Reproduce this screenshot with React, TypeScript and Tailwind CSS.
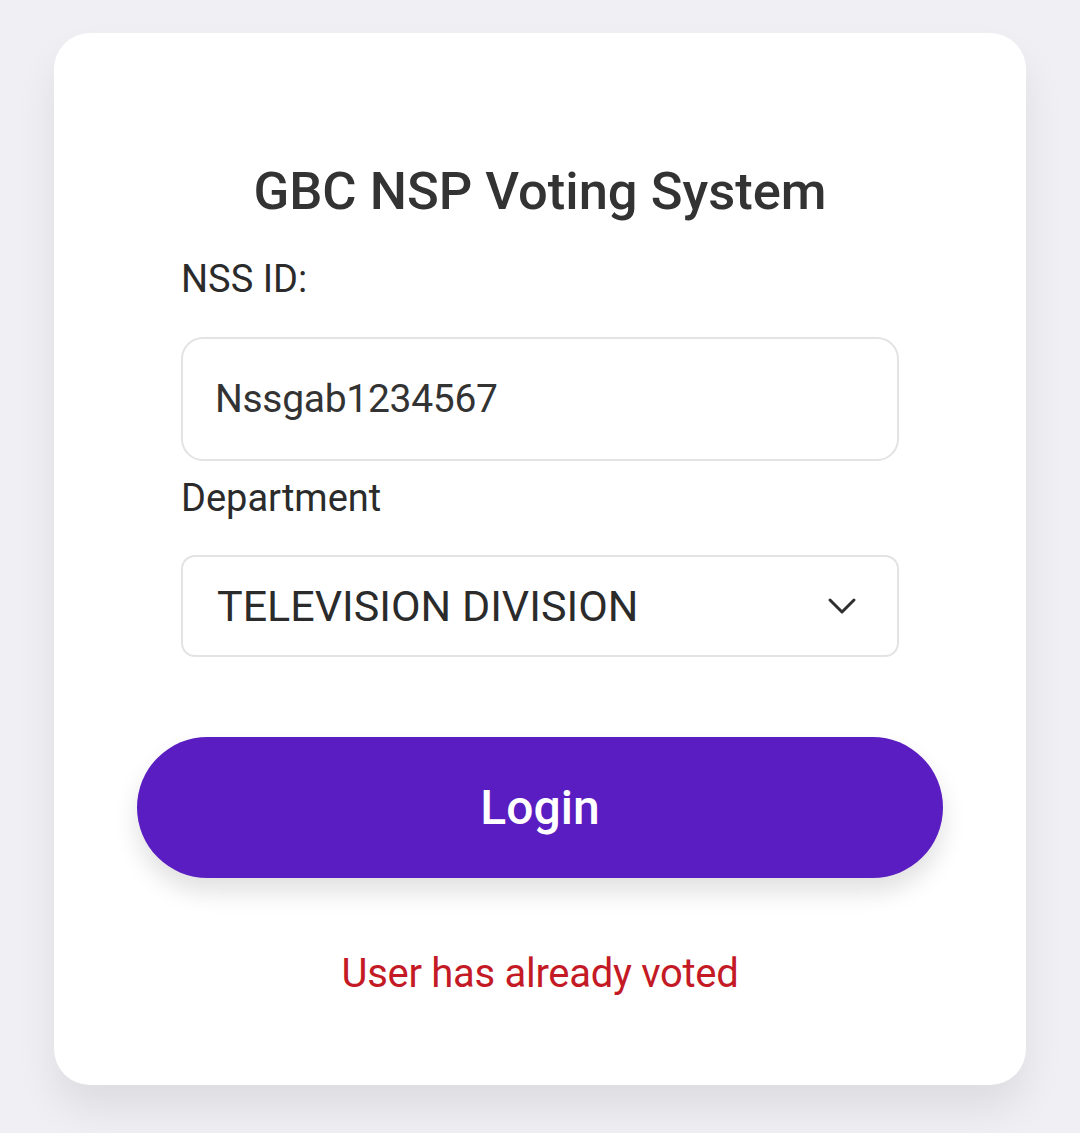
const ChevronDown = () => (
  <svg width="30" height="18" viewBox="0 0 30 18" fill="none">
    <path d="M3 3l12 12 12-12" stroke="#2f2f2f" strokeWidth="3" strokeLinecap="round" strokeLinejoin="round" />
  </svg>
)

const App = () => {
  return (
    <div className="min-h-[1133px] bg-[#efeff4] px-[54px] pt-[33px] pb-[48px] font-['Roboto',sans-serif]">
      <div className="bg-white rounded-[36px] shadow-[0_24px_40px_rgba(0,0,0,0.08)] h-[1052px] px-[83px] pt-[128px]">
        <h1 className="text-center text-[52.5px] leading-[60px] font-medium text-[#333333]">
          GBC NSP Voting System
        </h1>
        <div className="px-[44px] mt-[36px]">
          <label className="block text-[38px] leading-[44px] text-[#2b2b2b]">NSS ID:</label>
          <div className="mt-[36px] h-[124px] rounded-[22px] border-2 border-[#e3e3e6] flex items-center px-[32px]">
            <span className="text-[39px] text-[#333333] tracking-[-0.3px]">Nssgab1234567</span>
          </div>
          <label className="block mt-[15px] text-[38px] leading-[44px] text-[#2b2b2b]">Department</label>
          <div className="mt-[35px] h-[102px] rounded-[14px] border-2 border-[#e3e3e6] flex items-center justify-between pl-[34px] pr-[40px]">
            <span className="text-[43px] text-[#2b2b2b]">TELEVISION DIVISION</span>
            <ChevronDown />
          </div>
        </div>
        <button className="mt-[80px] w-full h-[141px] rounded-full bg-[#5a1dc1] text-white text-[48px] font-medium shadow-[0_14px_24px_rgba(0,0,0,0.12)]">
          Login
        </button>
        <p className="mt-[66px] text-center text-[40px] text-[#c41a26] tracking-[-0.3px]">User has already voted</p>
      </div>
    </div>
  )
}

export default App
